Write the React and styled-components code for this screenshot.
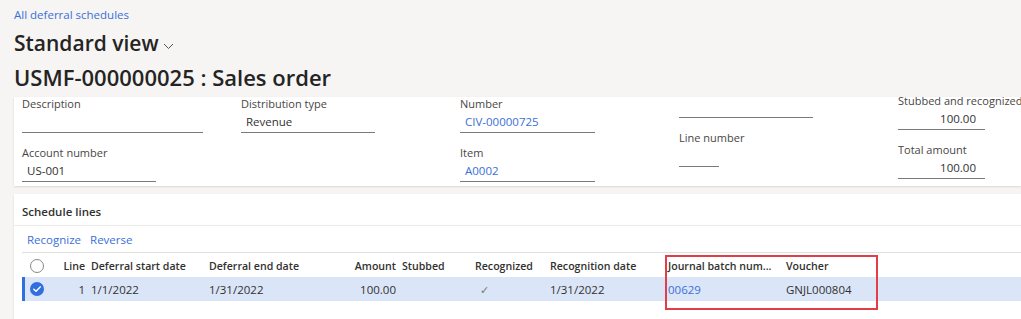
import React from "react";
import styled, { createGlobalStyle } from "styled-components";

const GlobalStyle = createGlobalStyle`
  html, body {
    margin: 0;
    padding: 0;
    background: #f6f5f4;
    font-family: "Open Sans", "Noto Sans", sans-serif;
    color: #323130;
  }
`;

const fields = [
  {
    offset: 0,
    items: [
      { label: "Description", value: "", width: 181 },
      { label: "Account number", value: "US-001", width: 134 },
    ],
  },
  {
    offset: 0,
    items: [{ label: "Distribution type", value: "Revenue", width: 134 }],
  },
  {
    offset: 0,
    items: [
      { label: "Number", value: "CIV-00000725", width: 135, link: true },
      { label: "Item", value: "A0002", width: 135, link: true },
    ],
  },
  {
    offset: -15,
    items: [
      { label: "", value: "", width: 134 },
      { label: "Line number", value: "", width: 40 },
    ],
  },
  {
    offset: -3,
    items: [
      { label: "Stubbed and recognized", value: "100.00", width: 87, right: true },
      { label: "Total amount", value: "100.00", width: 87, right: true },
    ],
  },
];

const columns = [
  { key: "line", title: "Line", width: 30, right: true },
  { key: "start", title: "Deferral start date", width: 118 },
  { key: "end", title: "Deferral end date", width: 124 },
  { key: "amount", title: "Amount", width: 69, right: true },
  { key: "stubbed", title: "Stubbed", width: 73 },
  { key: "recognized", title: "Recognized", width: 75 },
  { key: "recDate", title: "Recognition date", width: 118 },
  { key: "batch", title: "Journal batch num...", width: 118, link: true },
  { key: "voucher", title: "Voucher", width: 110 },
];

const rows = [
  {
    line: "1",
    start: "1/1/2022",
    end: "1/31/2022",
    amount: "100.00",
    stubbed: "",
    recognized: "check",
    recDate: "1/31/2022",
    batch: "00629",
    voucher: "GNJL000804",
  },
];

function CheckCircle() {
  return (
    <svg width="14" height="14" viewBox="0 0 14 14">
      <circle cx="7" cy="7" r="7" fill="#2f6fe0" />
      <path d="M3.8 7.2 L6 9.3 L10.2 4.9" stroke="#fff" strokeWidth="1.5" fill="none" strokeLinecap="round" strokeLinejoin="round" />
    </svg>
  );
}

export default function App() {
  return (
    <Page>
      <GlobalStyle />
      <Breadcrumb>All deferral schedules</Breadcrumb>
      <ViewTitle>
        Standard view
        <svg width="11" height="7" viewBox="0 0 11 7">
          <path d="M1 1 L5.5 5.5 L10 1" stroke="#555" strokeWidth="1" fill="none" />
        </svg>
      </ViewTitle>
      <RecordTitle>USMF-000000025 : Sales order</RecordTitle>

      <HeaderCard>
        {fields.map((col, i) => (
          <FieldColumn key={i} $offset={col.offset}>
            {col.items.map((f, j) => (
              <Field key={j}>
                <FieldLabel>{f.label}</FieldLabel>
                <FieldInput $width={f.width} $right={f.right} $link={f.link}>
                  {f.value}
                </FieldInput>
              </Field>
            ))}
          </FieldColumn>
        ))}
      </HeaderCard>

      <LinesCard>
        <SectionTitle>Schedule lines</SectionTitle>
        <ActionBar>
          <ActionLink>Recognize</ActionLink>
          <ActionLink>Reverse</ActionLink>
        </ActionBar>
        <Grid>
          <HeaderRow>
            <SelectCell>
              <Radio />
            </SelectCell>
            {columns.map((c) => (
              <HeadCell key={c.key} $width={c.width} $right={c.right}>
                {c.title}
              </HeadCell>
            ))}
          </HeaderRow>
          {rows.map((r, i) => (
            <DataRow key={i} $selected>
              <SelectCell>
                <CheckCircle />
              </SelectCell>
              {columns.map((c) => (
                <DataCell key={c.key} $width={c.width} $right={c.right} $link={c.link}>
                  {r[c.key] === "check" ? <Tick>✓</Tick> : r[c.key]}
                </DataCell>
              ))}
            </DataRow>
          ))}
          <Highlight />
        </Grid>
      </LinesCard>
    </Page>
  );
}

const Page = styled.div`
  width: 1021px;
  height: 319px;
  overflow: hidden;
  padding-left: 14px;
  box-sizing: border-box;
`;

const Breadcrumb = styled.div`
  font-size: 11.5px;
  color: #3a6fd8;
  padding-top: 5px;
  height: 19px;
  line-height: 19px;
`;

const ViewTitle = styled.div`
  display: flex;
  align-items: center;
  gap: 4px;
  font-size: 21px;
  font-weight: 600;
  color: #252423;
  height: 38px;

  svg {
    margin-top: 6px;
  }
`;

const RecordTitle = styled.div`
  font-size: 22px;
  font-weight: 600;
  color: #252423;
  height: 35px;
  line-height: 30px;
`;

const HeaderCard = styled.div`
  background: #fff;
  height: 89px;
  overflow: hidden;
  padding-left: 8px;
  display: grid;
  grid-template-columns: repeat(5, 219px);
  box-shadow: 0 1px 2px rgba(0, 0, 0, 0.12);
`;

const FieldColumn = styled.div`
  display: flex;
  flex-direction: column;
  gap: 13px;
  margin-top: ${(p) => p.$offset}px;
`;

const Field = styled.div`
  display: flex;
  flex-direction: column;
`;

const FieldLabel = styled.div`
  font-size: 11px;
  color: #484644;
  height: 13px;
  line-height: 13px;
  margin-bottom: 2px;
  white-space: nowrap;
`;

const FieldInput = styled.div`
  width: ${(p) => p.$width}px;
  height: 21px;
  line-height: 20px;
  box-sizing: border-box;
  border-bottom: 1px solid #7a7a7a;
  padding: 0 ${(p) => (p.$right ? "9px" : "0")} 0 5px;
  font-size: 11.5px;
  text-align: ${(p) => (p.$right ? "right" : "left")};
  color: ${(p) => (p.$link ? "#3a6fd8" : "#323130")};
`;

const LinesCard = styled.div`
  margin-top: 8px;
  background: #fff;
  height: 140px;
  padding-left: 8px;
  box-shadow: 0 1px 2px rgba(0, 0, 0, 0.12);
`;

const SectionTitle = styled.div`
  font-size: 11.5px;
  font-weight: 600;
  height: 31px;
  line-height: 35px;
  border-bottom: 1px solid #edebe9;
  margin-left: -8px;
  padding-left: 8px;
`;

const ActionBar = styled.div`
  display: flex;
  gap: 9px;
  height: 26px;
  align-items: center;
  padding-left: 5px;
  padding-top: 1px;
  box-sizing: border-box;
`;

const ActionLink = styled.span`
  font-size: 11.5px;
  color: #3a6fd8;
`;

const Grid = styled.div`
  position: relative;
  border-top: 1px solid #e1dfdd;
`;

const HeaderRow = styled.div`
  display: flex;
  height: 24px;
  align-items: center;
  padding-top: 1px;
  box-sizing: border-box;
`;

const DataRow = styled.div`
  display: flex;
  height: 24px;
  align-items: center;
  background: ${(p) => (p.$selected ? "#dae5f8" : "transparent")};
  box-shadow: ${(p) => (p.$selected ? "inset 3px 0 0 #2f6fe0" : "none")};
`;

const SelectCell = styled.div`
  width: 36px;
  box-sizing: border-box;
  padding-right: 6px;
  display: flex;
  justify-content: center;
  align-items: center;
`;

const Radio = styled.span`
  width: 12px;
  height: 12px;
  border: 1px solid #8a8886;
  border-radius: 50%;
`;

const HeadCell = styled.div`
  width: ${(p) => p.$width}px;
  flex-shrink: 0;
  box-sizing: border-box;
  padding: 0 3px;
  font-size: 10.6px;
  font-weight: 600;
  color: #323130;
  white-space: nowrap;
  text-align: ${(p) => (p.$right ? "right" : "left")};
`;

const DataCell = styled.div`
  width: ${(p) => p.$width}px;
  flex-shrink: 0;
  box-sizing: border-box;
  padding: 0 3px;
  font-size: 11.5px;
  white-space: nowrap;
  text-align: ${(p) => (p.$right ? "right" : "left")};
  color: ${(p) => (p.$link ? "#3a6fd8" : "#323130")};
`;

const Tick = styled.span`
  padding-left: 5px;
  color: #777;
  font-size: 11px;
`;

const Highlight = styled.div`
  position: absolute;
  left: 643px;
  top: 2px;
  width: 213px;
  height: 55px;
  box-sizing: border-box;
  border: 2px solid #e23d4b;
  pointer-events: none;
`;
